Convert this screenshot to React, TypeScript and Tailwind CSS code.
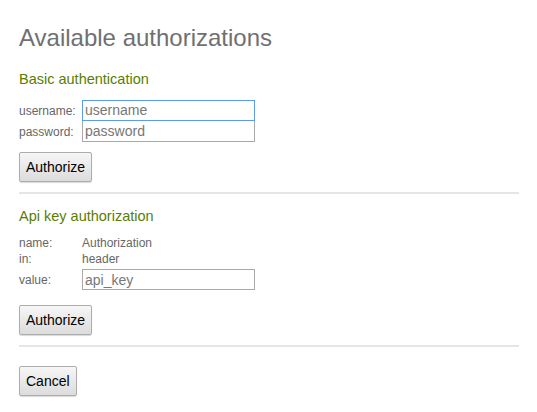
import React from 'react';

const font = { fontFamily: '"Liberation Sans", Arial, sans-serif' };

function Btn({ children }: { children: React.ReactNode }) {
  return (
    <button
      type="button"
      className="h-[30px] px-[6px] text-[14px] leading-none text-black border border-[#adadad] rounded-[2px] bg-gradient-to-b from-[#f6f6f6] to-[#dcdcdc] shadow-[0_1px_1px_rgba(0,0,0,0.15)]"
    >
      {children}
    </button>
  );
}

export default function App() {
  return (
    <div className="bg-white w-[537px] h-[412px] pl-[19px] pr-[18px] pt-[23px] text-[#666]" style={font}>
      <h2 className="text-[24px] leading-[29px] text-[#707070]">Available authorizations</h2>

      {/* Basic auth */}
      <h3 className="mt-[19px] text-[14.5px] leading-[17px] text-[#5a7d00]">Basic authentication</h3>
      <div className="mt-[12px] grid grid-cols-[63px_173px] items-center text-[12px]">
        <span>username:</span>
        <input
          className="h-[21px] border border-[#5b9bf0] px-[2px] text-[14px] text-[#333] placeholder:text-[#777] outline-none"
          placeholder="username"
        />
        <span>password:</span>
        <input
          className="h-[21px] border border-[#a9a9a9] border-t-0 px-[2px] text-[14px] text-[#333] placeholder:text-[#777] outline-none"
          placeholder="password"
        />
      </div>
      <div className="mt-[10px]">
        <Btn>Authorize</Btn>
      </div>
      <div className="mt-[10px] h-[2px] bg-[#e5e5e5]" />

      {/* Api key */}
      <h3 className="mt-[14px] text-[14.5px] leading-[17px] text-[#5a7d00]">Api key authorization</h3>
      <div className="mt-[10px] grid grid-cols-[63px_173px] items-center text-[12px] leading-[16px]">
        <span>name:</span>
        <span>Authorization</span>
        <span>in:</span>
        <span>header</span>
        <span className="mt-[2px]">value:</span>
        <input
          className="mt-[2px] h-[21px] border border-[#a9a9a9] px-[2px] text-[14px] text-[#333] placeholder:text-[#777] outline-none"
          placeholder="api_key"
        />
      </div>
      <div className="mt-[15px]">
        <Btn>Authorize</Btn>
      </div>
      <div className="mt-[10px] h-[2px] bg-[#e5e5e5]" />

      <div className="mt-[19px]">
        <Btn>Cancel</Btn>
      </div>
    </div>
  );
}
